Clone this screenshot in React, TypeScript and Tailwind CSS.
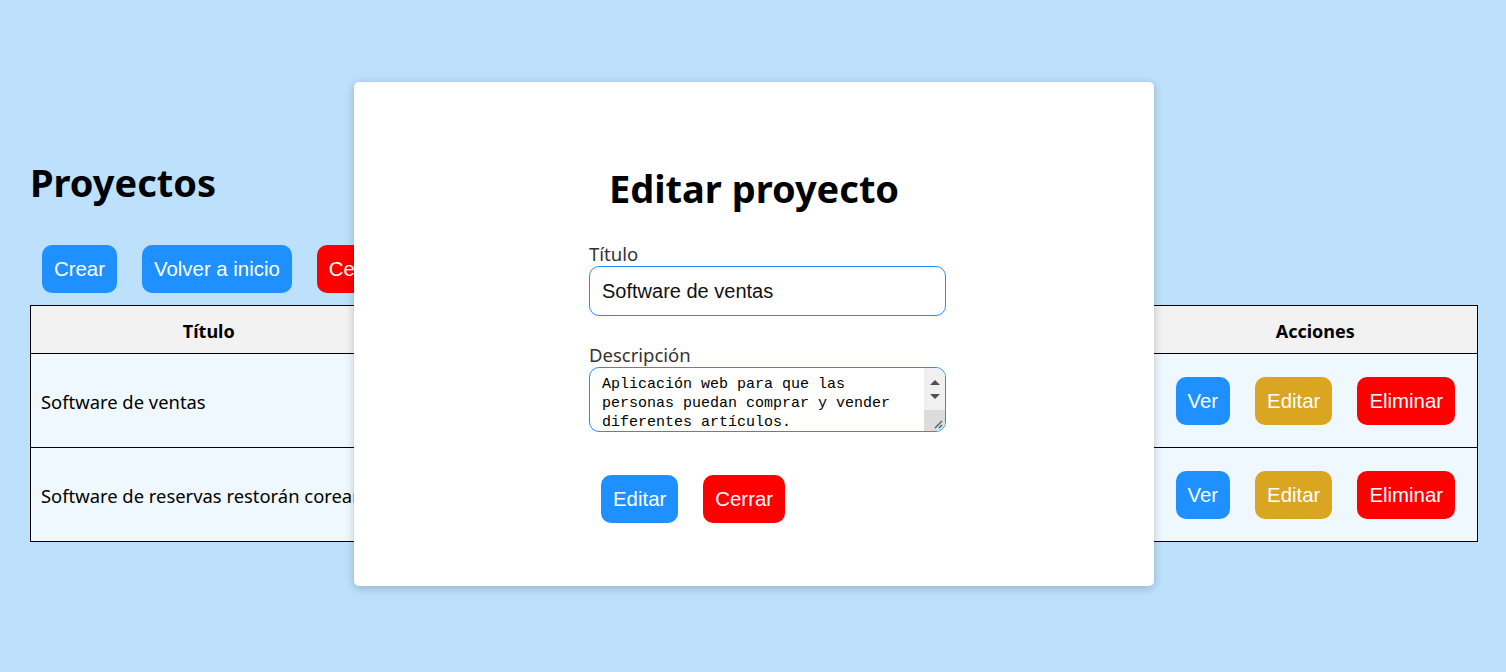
import React from "react";

const sans = { fontFamily: '"Noto Sans", "Open Sans", sans-serif' };

function Btn({ color, children }: { color: string; children: React.ReactNode }) {
  return (
    <button
      className={`${color} text-white text-[20.4px] leading-[24px] px-3 py-3 rounded-[10px] font-['Liberation_Sans',Arial,sans-serif]`}
    >
      {children}
    </button>
  );
}

export default function App() {
  return (
    <div className="relative w-[1506px] h-[672px] bg-[#bde0fd] overflow-hidden" style={sans}>
      <div className="pt-[154px] px-[30px]">
        <h1 className="text-[38px] font-bold leading-[56px] text-black">Proyectos</h1>
        <div className="flex gap-[25px] pl-[12px] mt-[35px]">
          <Btn color="bg-[#1e90ff]">Crear</Btn>
          <Btn color="bg-[#1e90ff]">Volver a inicio</Btn>
          <Btn color="bg-[#ff0000]">Cerrar sesión</Btn>
        </div>
        <table className="mt-[12px] w-[1448px] border-collapse border border-black text-[18.4px] text-black">
          <thead>
            <tr className="bg-[#f2f2f2] h-[48px] border-b border-black">
              <th className="w-[356px] font-bold text-[18px] pt-[3px]">Título</th>
              <th className="font-bold text-[18px] pt-[3px]">Descripción</th>
              <th className="w-[324px] font-bold text-[18px] pt-[3px]">Acciones</th>
            </tr>
          </thead>
          <tbody>
            {["Software de ventas", "Software de reservas restorán coreano"].map((t, i) => (
              <tr key={i} className="bg-[#f0f8ff] h-[94px] border-b border-black">
                <td className="pl-[10px] pt-[3px] whitespace-nowrap">{t}</td>
                <td className="pl-[10px]">Descripción</td>
                <td>
                  <div className="flex gap-[25px] pl-[22px]">
                    <Btn color="bg-[#1e90ff]">Ver</Btn>
                    <Btn color="bg-[#daa520]">Editar</Btn>
                    <Btn color="bg-[#ff0000]">Eliminar</Btn>
                  </div>
                </td>
              </tr>
            ))}
          </tbody>
        </table>
      </div>

      <div className="absolute left-[354px] top-[82px] w-[800px] h-[504px] bg-white rounded-[5px] shadow-[0_2px_10px_rgba(0,0,0,0.22)]">
        <h2 className="text-center text-[38px] font-bold leading-[50px] text-black mt-[81px]">Editar proyecto</h2>
        <div className="ml-[235px] w-[357px] mt-[30px]">
          <label className="block text-[18.5px] leading-[22px] text-[#333]">Título</label>
          <div className="mt-[1px] h-[50px] border border-[#1e90ff] rounded-[10px] flex items-center px-[12px] text-[20px] text-[#111] font-['Liberation_Sans',Arial,sans-serif]">
            Software de ventas
          </div>
          <label className="block mt-[28px] text-[18.5px] leading-[22px] text-[#333]">Descripción</label>
          <div className="mt-[1px] h-[65px] border border-[#1e90ff] rounded-[10px] flex overflow-hidden">
            <div className="flex-1 pl-[12px] pt-[7px] text-[15px] leading-[19px] text-black font-['Liberation_Mono',monospace] whitespace-pre">
              {"Aplicación web para que las\npersonas puedan comprar y vender\ndiferentes artículos."}
            </div>
            <div className="w-[21px] flex flex-col bg-[#f0f0f0]">
              <div className="h-[42px] flex flex-col items-center justify-center gap-[9px]">
                <div className="w-0 h-0 border-l-[5px] border-r-[5px] border-b-[5px] border-l-transparent border-r-transparent border-b-[#505050]" />
                <div className="w-0 h-0 border-l-[5px] border-r-[5px] border-t-[5px] border-l-transparent border-r-transparent border-t-[#505050]" />
              </div>
              <div className="flex-1 bg-[#dcdcdc] relative">
                <svg className="absolute right-[2px] bottom-[2px]" width="10" height="10" viewBox="0 0 10 10">
                  <path d="M9 2 L2 9 M9 6 L6 9" stroke="#555" strokeWidth="1.2" />
                </svg>
              </div>
            </div>
          </div>
          <div className="flex gap-[25px] pl-[12px] mt-[43px]">
            <Btn color="bg-[#1e90ff]">Editar</Btn>
            <Btn color="bg-[#ff0000]">Cerrar</Btn>
          </div>
        </div>
      </div>
    </div>
  );
}
